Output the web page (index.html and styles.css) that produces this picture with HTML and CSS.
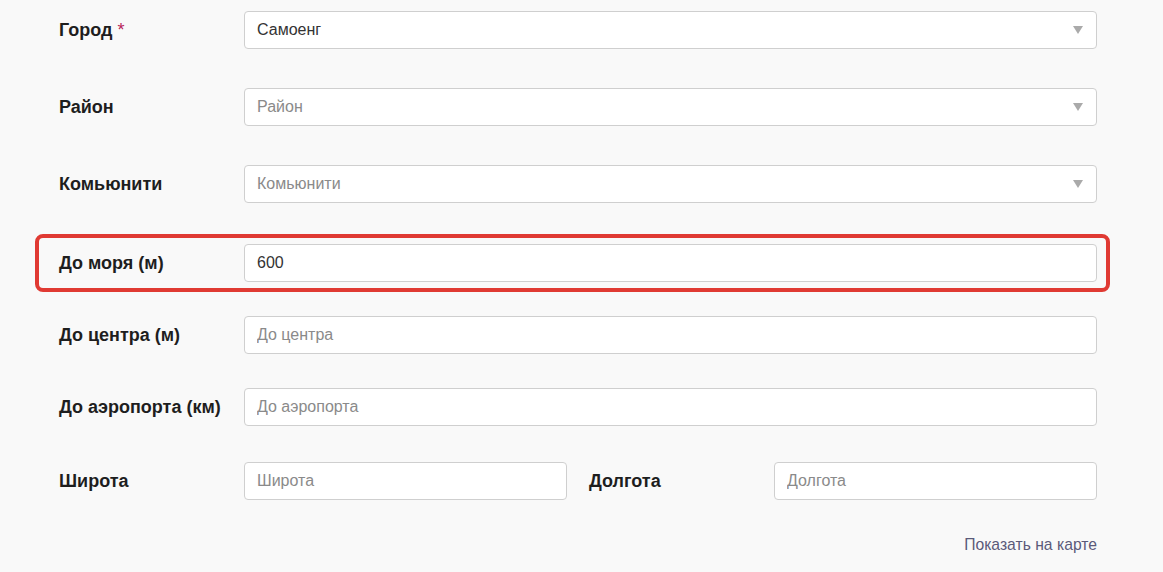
FILE: index.html
```html
<!DOCTYPE html>
<html lang="ru">
<head>
<meta charset="utf-8">
<title>Форма</title>
<link rel="stylesheet" href="styles.css">
</head>
<body>
<form class="form">
  <div class="row row-city">
    <label class="label">Город <span class="req">*</span></label>
    <div class="select">
      <span class="value">Самоенг</span>
      <svg class="arrow" width="10" height="8" viewBox="0 0 10 8"><path d="M0 0 H10 L5 8 Z" fill="#aaa"/></svg>
    </div>
  </div>
  <div class="row row-gap39">
    <label class="label">Район</label>
    <div class="select">
      <span class="placeholder">Район</span>
      <svg class="arrow" width="10" height="8" viewBox="0 0 10 8"><path d="M0 0 H10 L5 8 Z" fill="#aaa"/></svg>
    </div>
  </div>
  <div class="row row-gap39">
    <label class="label">Комьюнити</label>
    <div class="select">
      <span class="placeholder">Комьюнити</span>
      <svg class="arrow" width="10" height="8" viewBox="0 0 10 8"><path d="M0 0 H10 L5 8 Z" fill="#aaa"/></svg>
    </div>
  </div>
  <div class="row highlight">
    <label class="label">До моря (м)</label>
    <input class="input" type="text" value="600">
  </div>
  <div class="row row-gap24">
    <label class="label">До центра (м)</label>
    <input class="input" type="text" placeholder="До центра">
  </div>
  <div class="row row-gap34">
    <label class="label">До аэропорта (км)</label>
    <input class="input" type="text" placeholder="До аэропорта">
  </div>
  <div class="row row-gap36">
    <label class="label">Широта</label>
    <input class="input half" type="text" placeholder="Широта">
    <label class="label label-second">Долгота</label>
    <input class="input half" type="text" placeholder="Долгота">
  </div>
  <div class="links">
    <a class="map-link" href="#">Показать на карте</a>
  </div>
</form>
</body>
</html>
```
FILE: styles.css
```css
* {
  box-sizing: border-box;
}

html, body {
  margin: 0;
  padding: 0;
  background: #f9f9f9;
}

body {
  font-family: "Liberation Sans", Arial, sans-serif;
  color: #222;
}

.form {
  width: 1097px;
  padding: 11px 0 0 59px;
}

.row {
  display: flex;
  align-items: center;
  height: 38px;
}

.row-gap39 { margin-top: 39px; }
.row-gap24 { margin-top: 24px; }
.row-gap34 { margin-top: 34px; }
.row-gap36 { margin-top: 36px; }

.highlight {
  height: 58px;
  margin-top: 31px;
  margin-left: -24px;
  margin-right: -13px;
  padding: 4px 9px 4px 20px;
  border: 4px solid #e03a33;
  border-radius: 8px;
}

.label {
  width: 185px;
  flex: none;
  font-size: 18px;
  font-weight: bold;
  color: #1e1e1e;
}

.req {
  color: #b8255a;
  font-weight: normal;
}

.select,
.input {
  flex: 1;
  height: 38px;
  background: #fff;
  border: 1px solid #cfcfcf;
  border-radius: 4px;
  font-family: "Liberation Sans", Arial, sans-serif;
  font-size: 16px;
  color: #333;
  padding: 0 12px;
}

.select {
  display: flex;
  align-items: center;
  justify-content: space-between;
}

.input {
  outline: none;
  width: 100%;
}

.input::placeholder,
.placeholder {
  color: #8a8a8a;
}

.arrow {
  margin-right: 1px;
}

.half {
  flex: none;
  width: 323px;
}

.label-second {
  width: 185px;
  margin-left: 22px;
}

.links {
  display: flex;
  justify-content: flex-end;
  margin-top: 35px;
}

.map-link {
  font-size: 15.7px;
  line-height: 20px;
  color: #5b5a7a;
  text-decoration: none;
}
```
